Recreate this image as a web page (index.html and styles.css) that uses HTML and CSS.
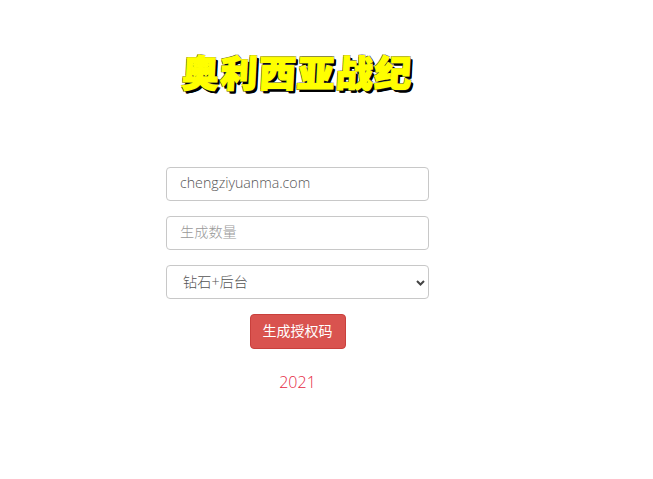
FILE: index.html
```html
<!DOCTYPE html>
<html lang="zh-CN">
<head>
    <meta charset="UTF-8">
    <title>奥利西亚战纪</title>
    <link rel="stylesheet" href="styles.css">
</head>
<body>
    <div class="container">
        <div class="logo">奥利西亚战纪</div>
        <form class="auth-form">
            <input class="field" type="text" value="chengziyuanma.com">
            <input class="field" type="text" placeholder="生成数量">
            <div class="select-wrap">
                <select class="field picker">
                    <option>钻石+后台</option>
                </select>
                <svg class="chevron" width="9" height="6" viewBox="0 0 9 6">
                    <path d="M1 1 L4.5 4.5 L8 1" fill="none" stroke="#444" stroke-width="2"/>
                </svg>
            </div>
            <button class="btn-danger" type="button">生成授权码</button>
        </form>
        <p class="year">2021</p>
    </div>
</body>
</html>
```

FILE: styles.css
```css
* {
    box-sizing: border-box;
}

body {
    margin: 0;
    background: #fff;
    font-family: "Open Sans", "Noto Sans CJK SC", sans-serif;
    font-weight: 300;
    color: #555;
}

.container {
    width: 263px;
    margin-left: 166px;
    padding-top: 48px;
    display: flex;
    flex-direction: column;
    align-items: center;
}

.logo {
    width: 263px;
    height: 48px;
    text-align: center;
    font-family: "Noto Sans CJK SC", sans-serif;
    font-weight: 900;
    font-size: 37px;
    line-height: 46px;
    letter-spacing: 1.5px;
    white-space: nowrap;
    color: #ff0;
    -webkit-text-stroke: 1.4px #ff0;
    text-shadow: 1px 1px 0 #222, -1px -1px 0 #555, 1px -1px 0 #555, -1px 1px 0 #222, 3px 3px 0 #000, 2px 3px 0 #000, 3px 2px 0 #000;
    transform: skewX(-3deg);
}

.auth-form {
    width: 100%;
    margin-top: 71px;
    display: flex;
    flex-direction: column;
    align-items: center;
    gap: 15px;
}

.field {
    display: block;
    width: 100%;
    height: 34px;
    padding: 0 13px 3px;
    border: 1px solid #c8c8c8;
    border-radius: 4px;
    background: #fff;
    font: inherit;
    font-size: 14.2px;
    color: #555;
    outline: none;
}

.field::placeholder {
    color: #999;
    opacity: 1;
}

.select-wrap {
    position: relative;
    width: 100%;
}

.picker {
    appearance: none;
    padding: 0 13px 1px 16px;
}

.chevron {
    position: absolute;
    right: 4px;
    top: 15px;
}

.btn-danger {
    width: 96px;
    height: 35px;
    padding: 0 0 3px;
    border: 1px solid #c9403c;
    border-radius: 4px;
    background: #d9534f;
    color: #fff;
    font-family: inherit;
    font-size: 14px;
    font-weight: 400;
}

.year {
    margin: 23px 0 0;
    font-size: 16px;
    line-height: 20px;
    color: #e6283f;
}
```
